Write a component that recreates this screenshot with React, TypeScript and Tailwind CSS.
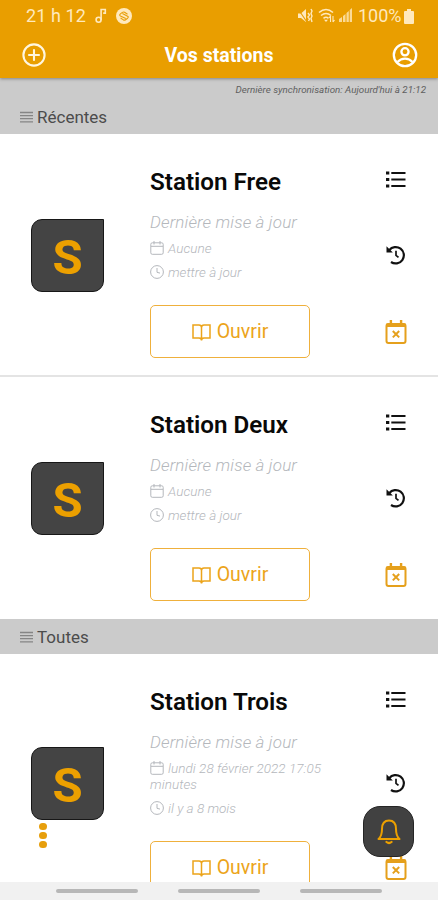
import React from "react";

type Station = {
  name: string;
  date: string;
  ago: string;
};

const recent: Station[] = [
  { name: "Station Free", date: "Aucune", ago: "mettre à jour" },
  { name: "Station Deux", date: "Aucune", ago: "mettre à jour" },
];

const all: Station[] = [
  {
    name: "Station Trois",
    date: "lundi 28 février 2022 17:05 minutes",
    ago: "il y a 8 mois",
  },
];

const StatusBar = () => (
  <div className="flex h-8 items-center justify-between pl-[26px] pr-6 text-[#ffe9bd]">
    <div className="flex items-center">
      <span className="w-[60px] whitespace-nowrap text-[18px] leading-8 tracking-[0.1px]">
        21 h 12
      </span>
      <svg className="ml-[9px] h-4 w-3" viewBox="0 0 12 16" fill="none">
        <circle cx="3.6" cy="11.8" r="2.5" stroke="currentColor" strokeWidth="1.6" />
        <path d="M6.1 12V1.5h4.2v3.6H8.2" stroke="currentColor" strokeWidth="1.6" />
      </svg>
      <svg className="ml-[9px] h-4 w-4" viewBox="0 0 16 16">
        <circle cx="8" cy="8" r="8" fill="#ffe9bd" />
        <path
          d="M11.5 6.2 8.6 4.2Q7.5 3.6 6.4 4.4L4.4 5.9q-1.4 1.2 0 2l5.4 2.6M4.6 10l2.8 1.9q1.1.6 2.2-.2l2-1.5q1.4-1.2 0-2L6.4 5.6"
          fill="none"
          stroke="#e79e08"
          strokeWidth="1.1"
        />
      </svg>
    </div>
    <div className="flex items-center">
      <svg className="-ml-0.5 h-4 w-4" viewBox="0 0 16 16" fill="none">
        <path d="M1 5.5h3L9 1v13l-5-4H1z" fill="currentColor" />
        <path d="m1 1 9 13" stroke="#e79e08" strokeWidth="1.2" />
        <path
          d="m11 5 1.5 2-1.5 2 1.5 2-1 2M14 1l1 2-1 2.5L15 8l-1 2.5 1 3.5"
          stroke="currentColor"
          strokeWidth="1.4"
        />
      </svg>
      <svg className="ml-[5px] h-4 w-[17px]" viewBox="0 0 17 16" fill="none">
        <path
          d="M1 4.5q7-6 14 0M3 7.5q5-4 10 0M5.5 10.3q2.5-2 5 0"
          stroke="currentColor"
          strokeWidth="1.6"
        />
        <path d="m8 14-2-2.3h4z" fill="currentColor" />
        <path d="M12.5 14V8m0 0-1.5 2m4-2v6m0 0 1.5-2" stroke="currentColor" strokeWidth="1.1" />
      </svg>
      <svg className="ml-1 h-4 w-[13px]" viewBox="0 0 13 16" fill="currentColor">
        <path d="M0 14v-3l3-2v5zM4 14V8l2.5-2v8zM7.5 14V5L9.8 3v11zM10.7 14V2L13 0v14z" opacity=".8" />
      </svg>
      <span className="ml-[6px] w-[46px] whitespace-nowrap text-[18px] leading-8">
        100%
      </span>
      <svg className="h-[15px] w-[10px]" viewBox="0 0 10 15" fill="currentColor">
        <path d="M3 0h4v2h2q1 0 1 1v11q0 1-1 1H1q-1 0-1-1V3q0-1 1-1h2z" />
      </svg>
    </div>
  </div>
);

const Header = () => (
  <header className="z-10 h-[78px] shrink-0 bg-[#e99e00] shadow-[0_1px_3px_rgba(0,0,0,0.35)]">
    <StatusBar />
    <div className="flex h-[45px] items-center justify-between pl-[22px] pr-5 text-white">
      <svg className="h-6 w-6" viewBox="0 0 24 24" fill="none" stroke="#fff6df" strokeWidth="2.1">
        <circle cx="12" cy="12" r="10.6" />
        <path d="M12 7v10M7 12h10" strokeLinecap="round" />
      </svg>
      <h1 className="pt-0.5 text-[19.5px] font-bold leading-6">Vos stations</h1>
      <svg className="h-[26px] w-[26px]" viewBox="0 0 26 26" fill="none" stroke="currentColor" strokeWidth="2.3">
        <circle cx="13" cy="13" r="11.2" />
        <circle cx="13" cy="9.8" r="3.6" />
        <path d="M5.5 20q3-3.4 7.5-3.4t7.5 3.4" />
      </svg>
    </div>
  </header>
);

const SectionTitle = ({ title }: { title: string }) => (
  <div className="flex h-[35px] items-center gap-1 pl-5 pt-px text-[#4c4c4c]">
    <svg className="h-3 w-[13px]" viewBox="0 0 13 12" stroke="#858585" strokeWidth="1.3">
      <path d="M0 1.5h13M0 4.6h13M0 7.7h13M0 10.8h13" />
    </svg>
    <h2 className="text-[17px] leading-6">{title}</h2>
  </div>
);

const ListIcon = () => (
  <svg className="h-[17px] w-5" viewBox="0 0 20 17" fill="#111">
    <path d="M0 .5h3.3v3H0zM0 7h3.3v3H0zM0 13.5h3.3v3H0z" />
    <path d="M5.3 1h14.2v2H5.3zM5.3 7.5h14.2v2H5.3zM5.3 14h14.2v2H5.3z" />
  </svg>
);

const HistoryIcon = () => (
  <svg className="mt-0.5 h-5 w-5" viewBox="0 0 20 20" fill="none" stroke="#111" strokeWidth="2.2">
    <path d="M3.2 5.2A8.2 8.2 0 1 1 5 17" />
    <path d="M.5 1.2v6.3h6.3z" fill="#111" stroke="none" />
    <path d="M10 5.8v4.6l2.5 2" strokeWidth="1.7" />
  </svg>
);

const CalendarRemoveIcon = () => (
  <svg className="h-6 w-[22px]" viewBox="-.5 0 22 24" fill="none" stroke="#e5a01c" strokeWidth="2">
    <rect x="1" y="4" width="19" height="19" rx="2" />
    <path d="M1 5.2h19" strokeWidth="3.6" />
    <path d="M5.4 0v4M15.6 0v4" strokeWidth="2.4" />
    <path d="m7.3 11 6.4 6.4m0-6.4-6.4 6.4" />
  </svg>
);

const StationCard = ({ station }: { station: Station }) => (
  <article className="flex bg-white pb-[17px] pl-[31px] pr-[31px] pt-[34px]">
    <div className="flex w-[73px] shrink-0 items-center">
      <div className="mt-[-16px] flex h-[73px] w-[73px] items-center justify-center rounded-[11px] rounded-tr-none border border-[#171717] bg-[#444]">
        <span className="mt-1 text-[49px] font-bold leading-none text-[#eca000]">S</span>
      </div>
    </div>
    <div className="ml-[46px] w-[184px] shrink-0 text-[#b4b7bc]">
      <h3 className="whitespace-nowrap text-[24.2px] font-semibold leading-7 text-[#090909]">
        {station.name}
      </h3>
      <p className="mt-[15px] whitespace-nowrap text-[17px] font-light italic leading-[22px] tracking-[0.15px]">
        Dernière mise à jour
      </p>
      <p className="mt-[7px] text-[13.5px] font-light italic leading-4 tracking-[0.05px]">
        <svg
          className="mr-1 inline-block h-[14px] w-[14px] align-[-2px]"
          viewBox="0 0 14 14"
          fill="none"
          stroke="currentColor"
        >
          <rect x=".8" y="1.8" width="12.4" height="11.5" rx="1.5" />
          <path d="M1 5.3h12M4 0v3.5M10 0v3.5" />
        </svg>
        {station.date}
      </p>
      <p className="mt-2 text-[13.5px] font-light italic leading-4">
        <svg
          className="mr-1 inline-block h-[14px] w-[14px] align-[-2px]"
          viewBox="0 0 14 14"
          fill="none"
          stroke="currentColor"
        >
          <circle cx="7" cy="7" r="6.4" />
          <path d="M7 3v4.3l3 .8" />
        </svg>
        {station.ago}
      </p>
      <button className="mt-[25px] flex h-[53px] w-40 items-center justify-center gap-[6px] rounded-[5px] border border-[#efb03c] pt-px text-[19.5px] text-[#eca41a]">
        <svg className="h-[17px] w-[19px]" viewBox="0 0 19 17" fill="none" stroke="currentColor" strokeWidth="1.5">
          <path d="M9.5 3.5Q9.5 1 7 1H1v13h6q2.5 0 2.5 2.5zM9.5 3.5Q9.5 1 12 1h6v13h-6q-2.5 0-2.5 2.5" />
        </svg>
        Ouvrir
      </button>
    </div>
    <div className="ml-auto flex flex-col items-center justify-between pb-[14px] pt-[3px]">
      <ListIcon />
      <HistoryIcon />
      <CalendarRemoveIcon />
    </div>
  </article>
);

const App = () => {
  return (
    <div className="relative flex h-[900px] w-full flex-col overflow-hidden bg-white font-[Roboto,sans-serif]">
      <Header />
      <main className="min-h-0 flex-1 overflow-hidden bg-[#cbcbcb]">
        <p className="h-[21px] pr-3 text-right text-[9.8px] italic leading-[23px] text-[#5f5f5f]">
          Dernière synchronisation: Aujourd'hui à 21:12
        </p>
        <SectionTitle title="Récentes" />
        <div className="divide-y-2 divide-[#e4e4e4] bg-white pb-px">
          {recent.map(station => (
            <StationCard key={station.name} station={station} />
          ))}
        </div>
        <SectionTitle title="Toutes" />
        {all.map(station => (
          <StationCard key={station.name} station={station} />
        ))}
      </main>
      <nav className="z-20 flex h-[18px] shrink-0 items-center justify-center gap-10 bg-[#f1f1f1]">
        <span className="h-1 w-[82px] rounded-full bg-[#b7b7b7]" />
        <span className="h-1 w-[82px] rounded-full bg-[#b7b7b7]" />
        <span className="h-1 w-[82px] rounded-full bg-[#b7b7b7]" />
      </nav>
      <div className="absolute bottom-[52px] left-[39px] flex flex-col gap-[1.5px]">
        <span className="h-[7.5px] w-[7.5px] rounded-full bg-[#e79f0c]" />
        <span className="h-[7.5px] w-[7.5px] rounded-full bg-[#e79f0c]" />
        <span className="h-[7.5px] w-[7.5px] rounded-full bg-[#e79f0c]" />
      </div>
      <button className="absolute bottom-[43px] right-6 flex h-[51px] w-[51px] items-center justify-center rounded-[17px] border border-[#252525] bg-[#414141]">
        <svg className="h-[26px] w-6" viewBox="0 0 24 26" fill="none" stroke="#eca000" strokeWidth="2">
          <path d="M1.5 20Q5 17 5 10q0-8.5 7-8.5T19 10q0 7 3.5 10z" strokeLinejoin="round" />
          <path d="M9.5 23q2.5 2 5 0" strokeLinecap="round" strokeWidth="2.2" />
        </svg>
      </button>
    </div>
  );
};

export default App;
